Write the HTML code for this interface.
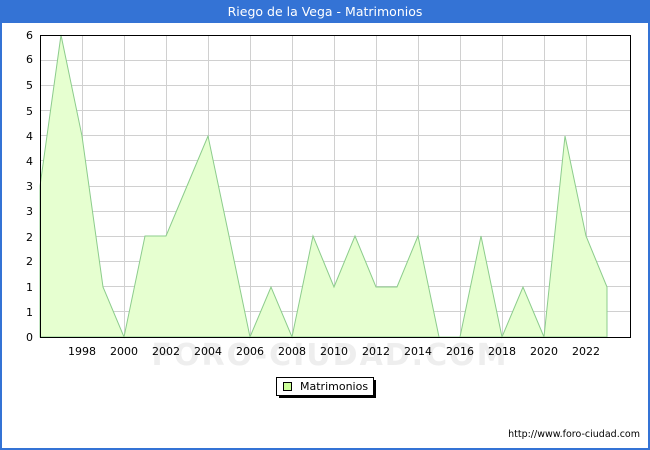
<!DOCTYPE html>
<html><head><meta charset="utf-8"><style>
html,body{margin:0;padding:0;width:650px;height:450px;overflow:hidden;background:#fff;font-family:"DejaVu Sans","Liberation Sans",sans-serif}
</style></head><body>
<svg width="650" height="450" xmlns="http://www.w3.org/2000/svg" style="display:block;font-family:'DejaVu Sans','Liberation Sans',sans-serif">
<rect x="0" y="0" width="650" height="450" fill="#3473d5"/>
<rect x="2" y="23" width="646" height="425" fill="#fff"/>
<text x="325" y="16" fill="#fff" font-size="12.5" text-anchor="middle">Riego de la Vega - Matrimonios</text>
<g stroke="#d0d0d0" stroke-width="1">
<line x1="40" y1="60.5" x2="631" y2="60.5"/><line x1="40" y1="85.5" x2="631" y2="85.5"/><line x1="40" y1="110.5" x2="631" y2="110.5"/><line x1="40" y1="135.5" x2="631" y2="135.5"/><line x1="40" y1="160.5" x2="631" y2="160.5"/><line x1="40" y1="186.5" x2="631" y2="186.5"/><line x1="40" y1="211.5" x2="631" y2="211.5"/><line x1="40" y1="236.5" x2="631" y2="236.5"/><line x1="40" y1="261.5" x2="631" y2="261.5"/><line x1="40" y1="286.5" x2="631" y2="286.5"/><line x1="40" y1="311.5" x2="631" y2="311.5"/>
<line x1="82.5" y1="35" x2="82.5" y2="337"/><line x1="124.5" y1="35" x2="124.5" y2="337"/><line x1="166.5" y1="35" x2="166.5" y2="337"/><line x1="208.5" y1="35" x2="208.5" y2="337"/><line x1="250.5" y1="35" x2="250.5" y2="337"/><line x1="292.5" y1="35" x2="292.5" y2="337"/><line x1="334.5" y1="35" x2="334.5" y2="337"/><line x1="376.5" y1="35" x2="376.5" y2="337"/><line x1="418.5" y1="35" x2="418.5" y2="337"/><line x1="460.5" y1="35" x2="460.5" y2="337"/><line x1="502.5" y1="35" x2="502.5" y2="337"/><line x1="544.5" y1="35" x2="544.5" y2="337"/><line x1="586.5" y1="35" x2="586.5" y2="337"/>
</g>
<text x="330" y="365" font-size="30" fill="#eeeeee" text-anchor="middle" font-weight="bold" letter-spacing="2">FORO-CIUDAD.COM</text>
<polygon fill="#e6ffd0" stroke="#8ccc8c" stroke-width="1" points="40,337 40,186 61,35 82,136 103,287 124,337 145,236 166,236 187,186 208,136 229,236 250,337 271,287 292,337 313,236 334,287 355,236 376,287 397,287 418,236 439,337 460,337 481,236 502,337 523,287 544,337 565,136 586,236 607,287 607,337"/>
<rect x="40.5" y="35.5" width="590" height="302" fill="none" stroke="#000" stroke-width="1"/>
<g font-size="11" fill="#000" text-anchor="end">
<text x="33" y="341">0</text><text x="33" y="316">1</text><text x="33" y="291">1</text><text x="33" y="265">2</text><text x="33" y="241">2</text><text x="33" y="215">3</text><text x="33" y="190">3</text><text x="33" y="165">4</text><text x="33" y="140">4</text><text x="33" y="115">5</text><text x="33" y="89">5</text><text x="33" y="63">6</text><text x="33" y="39">6</text>
</g>
<g font-size="11" fill="#000" text-anchor="middle">
<text x="82" y="355">1998</text><text x="124" y="355">2000</text><text x="166" y="355">2002</text><text x="208" y="355">2004</text><text x="250" y="355">2006</text><text x="292" y="355">2008</text><text x="334" y="355">2010</text><text x="376" y="355">2012</text><text x="418" y="355">2014</text><text x="460" y="355">2016</text><text x="502" y="355">2018</text><text x="544" y="355">2020</text><text x="586" y="355">2022</text>
</g>
<rect x="279" y="380" width="97" height="18" fill="#000"/>
<rect x="276.5" y="377.5" width="97" height="18" fill="#fff" stroke="#000" stroke-width="1"/>
<rect x="283.5" y="382.5" width="8" height="8" fill="#ccff99" stroke="#000" stroke-width="1"/>
<text x="300" y="390" font-size="11" fill="#000">Matrimonios</text>
<text x="640" y="437" font-size="9.5" fill="#000" text-anchor="end">http://www.foro-ciudad.com</text>
</svg>
</body></html>
